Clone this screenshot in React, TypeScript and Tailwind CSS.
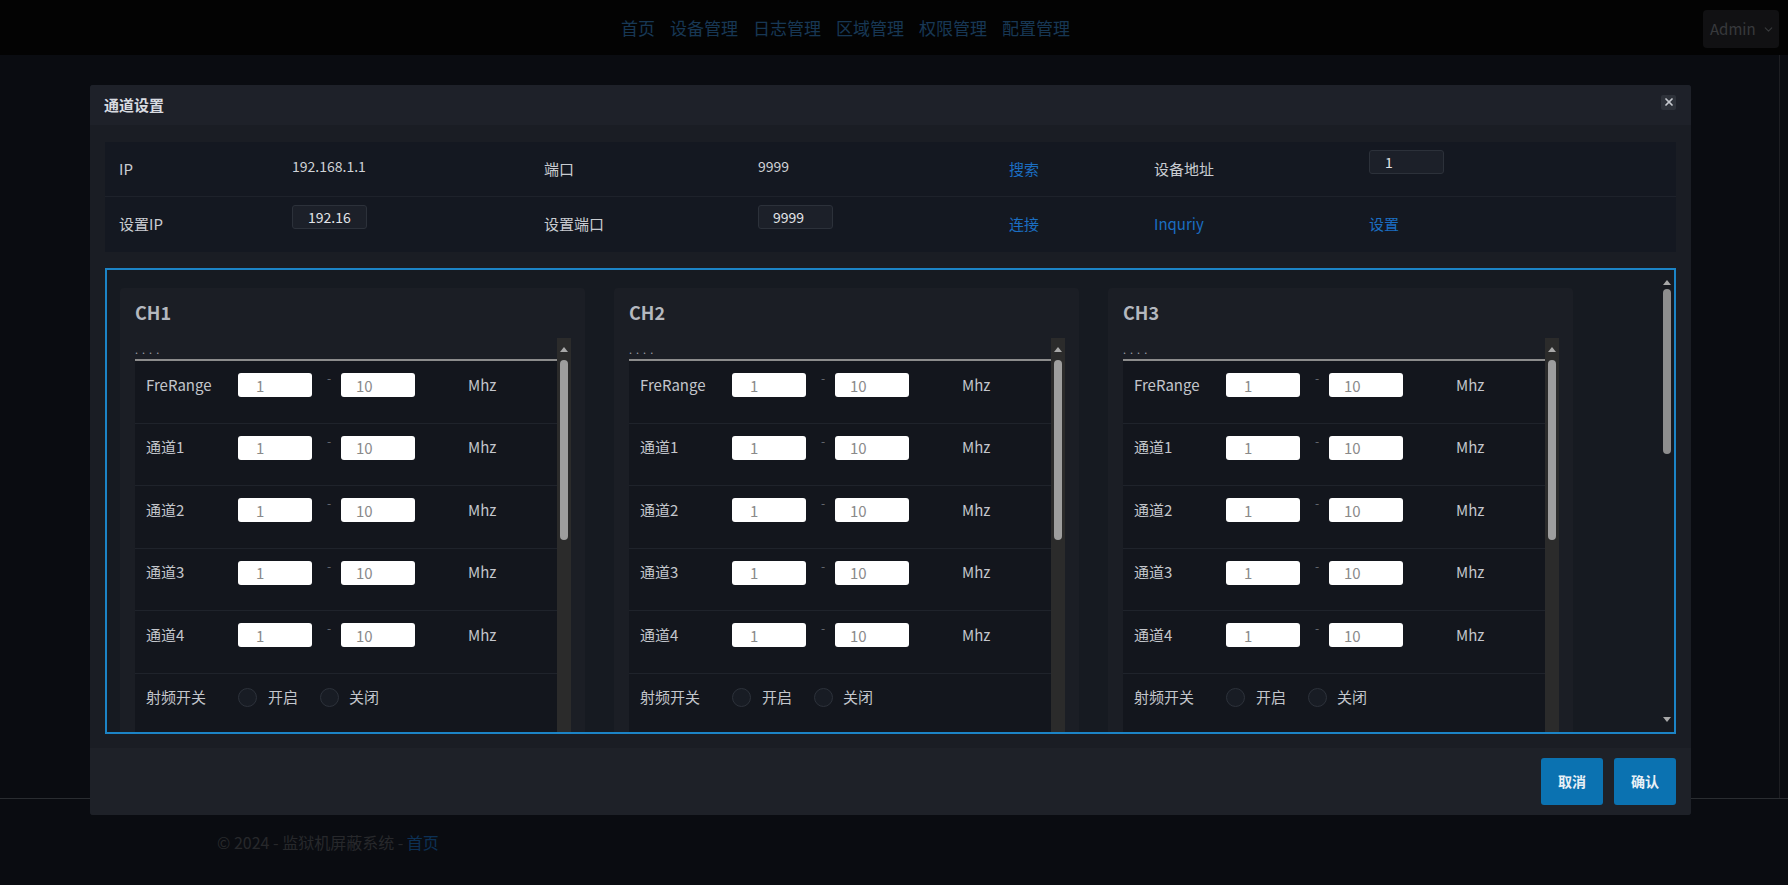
import { ChevronDown, X } from "lucide-react";

const navItems = ["首页", "设备管理", "日志管理", "区域管理", "权限管理", "配置管理"];
const channels = ["CH1", "CH2", "CH3"];
const ranges = ["FreRange", "通道1", "通道2", "通道3", "通道4"];

function RangeRow({ label }: { label: string }) {
  return (
    <div className="h-[62.5px] border-b border-[#1f232b] pl-[11px] pt-[12px]">
      <div className="flex h-[24px] items-center">
        <span className="w-[92px] text-[15px] text-[#c3c6cc]">{label}</span>
        <input
          readOnly
          value="1"
          className="h-[24px] w-[74px] rounded-[3px] bg-white pl-[18px] text-[15px] text-[#8a8a8a] outline-none"
        />
        <span className="ml-[15px] w-[14px] self-start text-[12px] leading-[10px] text-[#6b6f76]">-</span>
        <input
          readOnly
          value="10"
          className="h-[24px] w-[74px] rounded-[3px] bg-white pl-[15px] text-[15px] text-[#8a8a8a] outline-none"
        />
        <span className="ml-[53px] text-[15px] text-[#c3c6cc]">Mhz</span>
      </div>
    </div>
  );
}

function Radio() {
  return <span className="h-[19px] w-[19px] rounded-full border border-[#2d323b] bg-[#181c24]" />;
}

function ChannelCard({ name }: { name: string }) {
  return (
    <div className="w-[465px] rounded-[4px] bg-[#1b1e25] pl-[15px] pr-[14px] pt-[12px]">
      <div className="mb-[14px] h-[24px] text-[18px] font-bold leading-[24px] text-[#b4b8bf]">{name}</div>
      <div className="flex h-[400px]">
        <div className="flex-1">
          <div className="flex h-[23px] items-end border-b-2 border-[#8c8c8c] pb-[4px] text-[11px] leading-none tracking-[4px] text-[#9a9ea5]">
            ....
          </div>
          <div className="bg-[#13161d]">
            {ranges.map((r) => (
              <RangeRow key={r} label={r} />
            ))}
            <div className="h-[62.5px] pl-[11px] pt-[12px]">
              <div className="flex h-[24px] items-center text-[15px] text-[#c3c6cc]">
                <span className="w-[92px]">射频开关</span>
                <Radio />
                <span className="ml-[11px]">开启</span>
                <span className="ml-[22px] flex">
                  <Radio />
                </span>
                <span className="ml-[10px]">关闭</span>
              </div>
            </div>
          </div>
        </div>
        <div className="flex w-[14px] flex-col items-center bg-[#2b2b2b]">
          <div className="flex h-[22px] items-center">
            <span className="h-0 w-0 border-x-[4px] border-b-[5px] border-x-transparent border-b-[#a8a8a8]" />
          </div>
          <div className="h-[180px] w-[8px] rounded-full bg-[#9e9e9e]" />
        </div>
      </div>
    </div>
  );
}

export default function App() {
  return (
    <div className="relative h-[885px] w-full overflow-hidden bg-[#141822] font-['Noto_Sans_CJK_SC',sans-serif]">
      <nav className="flex h-[55px] items-center bg-[#060606] pl-[621px] pr-[9px]">
        <div className="flex gap-[15px] text-[17px] text-[#2f6fa8]">
          {navItems.map((n) => (
            <span key={n}>{n}</span>
          ))}
        </div>
        <div className="ml-auto mt-[10px] flex h-[38px] w-[76px] items-center gap-[6px] self-start rounded-[4px] bg-[#222326] pl-[7px] text-[15px] text-[#6f7278]">
          Admin
          <ChevronDown size={13} />
        </div>
      </nav>
      <main className="mr-[8px] h-[743px] border-r border-[#3a3d44]" />
      <footer className="border-t border-[#555a62] pl-[217px] pt-[31px] text-[16px] text-[#4e5157]">
        © 2024 - 监狱机屏蔽系统 - <span className="text-[#1a62aa]">首页</span>
      </footer>

      <div className="absolute inset-0 bg-black/50" />

      <div className="absolute left-[90px] top-[85px] w-[1601px] overflow-hidden rounded-[3px] bg-[#1a1d24]">
        <div className="flex h-[40px] items-center bg-[#1e2129] pl-[14px] pr-[15px]">
          <span className="text-[15px] font-bold text-[#d8dbe0]">通道设置</span>
          <span className="mb-[6px] ml-auto flex h-[15px] w-[15px] items-center justify-center rounded-[2px] bg-[#2e323a] text-[#c5c8ce]">
            <X size={12} strokeWidth={3.5} />
          </span>
        </div>

        <div className="px-[15px] pt-[17px]">
          <div className="bg-[#141821] text-[15px] text-[#c9ccd1]">
            <div className="grid h-[55px] grid-cols-[173px_252px_214px_251px_145px_215px_1fr] border-b border-[#1e222b] pl-[14px]">
              <span className="self-center">IP</span>
              <span className="pt-[14px] text-[14px] leading-[20px] text-[#cfd2d6]">192.168.1.1</span>
              <span className="self-center">端口</span>
              <span className="pt-[14px] text-[14px] leading-[20px] text-[#cfd2d6]">9999</span>
              <span className="self-center text-[#1b6ec2]">搜索</span>
              <span className="self-center">设备地址</span>
              <div className="pt-[8px]">
                <input
                  readOnly
                  value="1"
                  className="h-[24px] w-[75px] rounded-[3px] border border-[#2c313a] bg-[#1c2029] pl-[15px] text-[14px] text-[#e2e4e8] outline-none"
                />
              </div>
            </div>
            <div className="grid h-[55px] grid-cols-[173px_252px_214px_251px_145px_215px_1fr] pl-[14px]">
              <span className="self-center">设置IP</span>
              <div className="pt-[8px]">
                <input
                  readOnly
                  value="192.16"
                  className="h-[24px] w-[75px] rounded-[3px] border border-[#2c313a] bg-[#1c2029] pl-[15px] text-[14px] text-[#e2e4e8] outline-none"
                />
              </div>
              <span className="self-center">设置端口</span>
              <div className="pt-[8px]">
                <input
                  readOnly
                  value="9999"
                  className="h-[24px] w-[75px] rounded-[3px] border border-[#2c313a] bg-[#1c2029] pl-[14px] text-[14px] text-[#e2e4e8] outline-none"
                />
              </div>
              <span className="self-center text-[#1b6ec2]">连接</span>
              <span className="self-center text-[#1b6ec2]">Inquriy</span>
              <span className="self-center text-[#1b6ec2]">设置</span>
            </div>
          </div>

          <div className="mt-[16px] flex h-[466px] border-2 border-[#1c84c6] bg-[#161a21]">
            <div className="flex flex-1 items-start gap-x-[29px] overflow-hidden pl-[13px] pt-[18px]">
              {channels.map((c) => (
                <ChannelCard key={c} name={c} />
              ))}
            </div>
            <div className="flex w-[14px] flex-col items-center bg-[#171a20]">
              <div className="flex h-[19px] items-end pb-[4px]">
                <span className="h-0 w-0 border-x-[4px] border-b-[5px] border-x-transparent border-b-[#a8a8a8]" />
              </div>
              <div className="h-[165px] w-[8px] rounded-full bg-[#8e8e8e]" />
              <div className="mt-auto flex h-[16px] items-start pt-[1px]">
                <span className="h-0 w-0 border-x-[4px] border-t-[5px] border-x-transparent border-t-[#a8a8a8]" />
              </div>
            </div>
          </div>
        </div>

        <div className="mt-[14px] flex h-[67px] items-center justify-end gap-[11px] bg-[#1e2128] pr-[15px]">
          <button className="h-[47px] w-[62px] rounded-[3px] bg-[#0b72b1] text-[14px] font-bold text-[#e8f0f6]">
            取消
          </button>
          <button className="h-[47px] w-[62px] rounded-[3px] bg-[#0b72b1] text-[14px] font-bold text-[#e8f0f6]">
            确认
          </button>
        </div>
      </div>
    </div>
  );
}
